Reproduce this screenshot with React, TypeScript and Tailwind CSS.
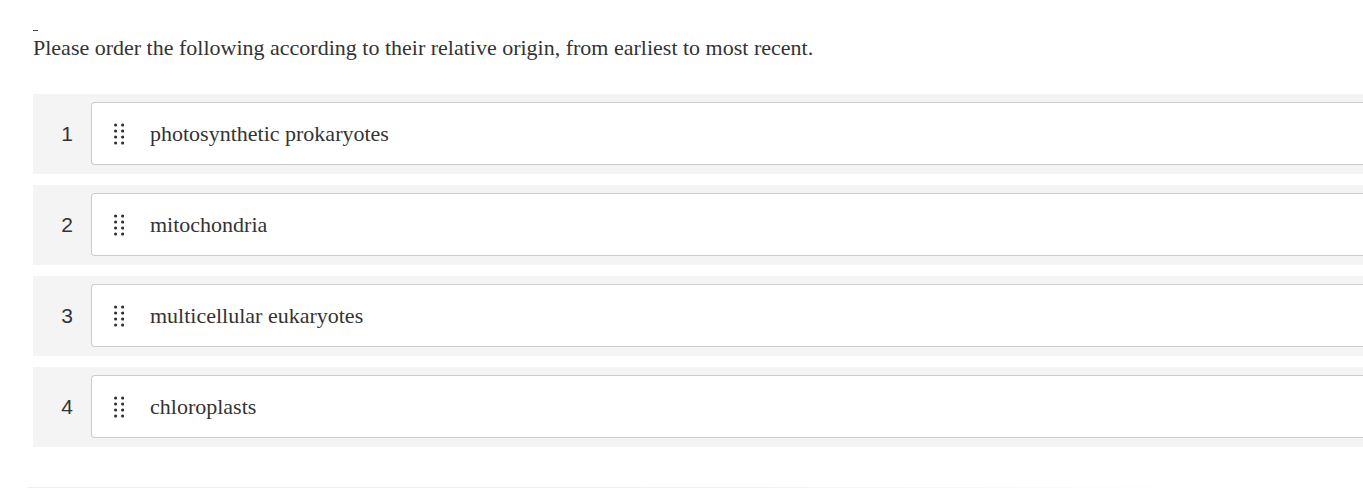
import React from 'react';

const items = [
  'photosynthetic prokaryotes',
  'mitochondria',
  'multicellular eukaryotes',
  'chloroplasts',
];

function DragHandle() {
  return (
    <svg width="10" height="22" viewBox="0 0 10 22" className="shrink-0">
      {[0, 1, 2, 3].map((r) =>
        [0, 1].map((c) => (
          <circle key={`${r}-${c}`} cx={1.6 + c * 7} cy={2 + r * 6} r={1.6} fill="#333" />
        ))
      )}
    </svg>
  );
}

export default function App() {
  return (
    <div className="min-h-[493px] w-[1363px] overflow-hidden bg-white font-['Liberation_Serif',serif] text-[#333]">
      <div className="pl-[33px] pt-[30px]">
        <div className="h-px w-[5px] bg-[#444]" />
        <p className="mt-[4px] text-[22px] leading-[26px]">
          Please order the following according to their relative origin, from earliest to most recent.
        </p>

        <ol className="mt-[33px] flex w-[1345px] flex-col gap-[11px]">
          {items.map((label, i) => (
            <li key={label} className="flex h-[80px] bg-[#f4f4f4] pt-2 pb-[9px]">
              <span className="flex w-[58px] shrink-0 items-center justify-center pl-[10px] font-['Liberation_Sans',sans-serif] text-[21px]">
                {i + 1}
              </span>
              <div className="flex flex-1 items-center rounded-l-[4px] border border-r-0 border-[#cccccc] bg-white pl-[22px]">
                <DragHandle />
                <span className="ml-[26px] text-[22px]">{label}</span>
              </div>
            </li>
          ))}
        </ol>
      </div>
      <div className="mt-[40px] ml-[28px] h-px w-[1180px] bg-gradient-to-r from-[#eeeeee] via-[#eeeeee] to-transparent" />
    </div>
  );
}
